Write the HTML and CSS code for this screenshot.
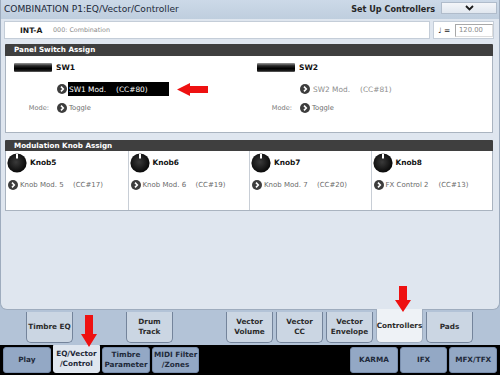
FILE: index.html
```html
<!DOCTYPE html>
<html>
<head>
<meta charset="utf-8">
<link rel="stylesheet" href="styles.css">
</head>
<body>
<div class="screen">
  <div class="main">
    <div class="titlebar">
      <span class="title">COMBINATION P1:EQ/Vector/Controller</span>
      <span class="setup">Set Up Controllers</span>
      <span class="dropdown"><svg width="9" height="6" viewBox="0 0 9 6"><polyline points="1,1 4.5,4.5 8,1" fill="none" stroke="#1a1a1a" stroke-width="1.8"/></svg></span>
    </div>
    <div class="inforow">
      <div class="prog"><span class="bank">INT-A</span><span class="progname">000: Combination</span></div>
      <div class="tempo"><span class="note">&#9833; =</span><span class="tempoval">120.00</span></div>
    </div>

    <section class="group">
      <div class="ghead">Panel Switch Assign</div>
      <div class="gbody swgrid">
        <div class="sw">
          <div class="swhead"><span class="swbar"></span><span class="swname">SW1</span></div>
          <div class="swrow">
            <span class="lbl"></span>
            <svg class="pick" width="10" height="10" viewBox="0 0 10 10"><circle cx="5" cy="5" r="5" fill="#3d3d3d"/><polyline points="4,2.6 6.3,5 4,7.4" fill="none" stroke="#fff" stroke-width="1.6"/></svg>
            <span class="val sel"><span class="vname">SW1 Mod.</span><span class="cc">(CC#80)</span></span>
          </div>
          <div class="swrow mode">
            <span class="lbl">Mode:</span>
            <svg class="pick" width="10" height="10" viewBox="0 0 10 10"><circle cx="5" cy="5" r="5" fill="#3d3d3d"/><polyline points="4,2.6 6.3,5 4,7.4" fill="none" stroke="#fff" stroke-width="1.6"/></svg>
            <span class="plain">Toggle</span>
          </div>
        </div>
        <div class="sw">
          <div class="swhead"><span class="swbar"></span><span class="swname">SW2</span></div>
          <div class="swrow">
            <span class="lbl"></span>
            <svg class="pick" width="10" height="10" viewBox="0 0 10 10"><circle cx="5" cy="5" r="5" fill="#3d3d3d"/><polyline points="4,2.6 6.3,5 4,7.4" fill="none" stroke="#fff" stroke-width="1.6"/></svg>
            <span class="val dim"><span class="vname">SW2 Mod.</span><span class="cc">(CC#81)</span></span>
          </div>
          <div class="swrow mode">
            <span class="lbl">Mode:</span>
            <svg class="pick" width="10" height="10" viewBox="0 0 10 10"><circle cx="5" cy="5" r="5" fill="#3d3d3d"/><polyline points="4,2.6 6.3,5 4,7.4" fill="none" stroke="#fff" stroke-width="1.6"/></svg>
            <span class="plain">Toggle</span>
          </div>
        </div>
      </div>
    </section>

    <section class="group knobs">
      <div class="ghead">Modulation Knob Assign</div>
      <div class="gbody knobgrid">
        <div class="knob">
          <div class="khead"><svg class="kicon" width="20" height="20" viewBox="0 0 20 20"><defs><radialGradient id="kg" cx="0.45" cy="0.45" r="0.6"><stop offset="0" stop-color="#3a3a3a"/><stop offset="1" stop-color="#050505"/></radialGradient></defs><circle cx="10" cy="10" r="9.6" fill="url(#kg)"/><line x1="10" y1="0.8" x2="10" y2="5.5" stroke="#fff" stroke-width="2"/></svg><span class="kname">Knob5</span></div>
          <div class="krow"><svg class="pick" width="10" height="10" viewBox="0 0 10 10"><circle cx="5" cy="5" r="5" fill="#3d3d3d"/><polyline points="4,2.6 6.3,5 4,7.4" fill="none" stroke="#fff" stroke-width="1.6"/></svg><span class="kval">Knob Mod. 5</span><span class="kcc">(CC#17)</span></div>
        </div>
        <div class="knob">
          <div class="khead"><svg class="kicon" width="20" height="20" viewBox="0 0 20 20"><circle cx="10" cy="10" r="9.6" fill="url(#kg)"/><line x1="10" y1="0.8" x2="10" y2="5.5" stroke="#fff" stroke-width="2"/></svg><span class="kname">Knob6</span></div>
          <div class="krow"><svg class="pick" width="10" height="10" viewBox="0 0 10 10"><circle cx="5" cy="5" r="5" fill="#3d3d3d"/><polyline points="4,2.6 6.3,5 4,7.4" fill="none" stroke="#fff" stroke-width="1.6"/></svg><span class="kval">Knob Mod. 6</span><span class="kcc">(CC#19)</span></div>
        </div>
        <div class="knob">
          <div class="khead"><svg class="kicon" width="20" height="20" viewBox="0 0 20 20"><circle cx="10" cy="10" r="9.6" fill="url(#kg)"/><line x1="10" y1="0.8" x2="10" y2="5.5" stroke="#fff" stroke-width="2"/></svg><span class="kname">Knob7</span></div>
          <div class="krow"><svg class="pick" width="10" height="10" viewBox="0 0 10 10"><circle cx="5" cy="5" r="5" fill="#3d3d3d"/><polyline points="4,2.6 6.3,5 4,7.4" fill="none" stroke="#fff" stroke-width="1.6"/></svg><span class="kval">Knob Mod. 7</span><span class="kcc">(CC#20)</span></div>
        </div>
        <div class="knob">
          <div class="khead"><svg class="kicon" width="20" height="20" viewBox="0 0 20 20"><circle cx="10" cy="10" r="9.6" fill="url(#kg)"/><line x1="10" y1="0.8" x2="10" y2="5.5" stroke="#fff" stroke-width="2"/></svg><span class="kname">Knob8</span></div>
          <div class="krow"><svg class="pick" width="10" height="10" viewBox="0 0 10 10"><circle cx="5" cy="5" r="5" fill="#3d3d3d"/><polyline points="4,2.6 6.3,5 4,7.4" fill="none" stroke="#fff" stroke-width="1.6"/></svg><span class="kval">FX Control 2</span><span class="kcc">(CC#13)</span></div>
        </div>
      </div>
    </section>
  </div>

  <div class="tabs1">
    <div class="tab1">Timbre EQ</div>
    <div class="tab1 empty"></div>
    <div class="tab1">Drum<br>Track</div>
    <div class="tab1 empty"></div>
    <div class="tab1">Vector<br>Volume</div>
    <div class="tab1">Vector<br>CC</div>
    <div class="tab1">Vector<br>Envelope</div>
    <div class="tab1 active">Controllers</div>
    <div class="tab1">Pads</div>
  </div>

  <div class="tabs2">
    <div class="tab2">Play</div>
    <div class="tab2 active">EQ/Vector<br>/Control</div>
    <div class="tab2">Timbre<br>Parameter</div>
    <div class="tab2">MIDI Filter<br>/Zones</div>
    <div class="tab2 empty"></div>
    <div class="tab2 empty"></div>
    <div class="tab2 empty"></div>
    <div class="tab2">KARMA</div>
    <div class="tab2">IFX</div>
    <div class="tab2">MFX/TFX</div>
  </div>

  <svg class="arrow arrow-left" width="31" height="13" viewBox="0 0 31 13"><polygon points="0,6.5 13,0 13,3 31,3 31,10 13,10 13,13" fill="#ee1111"/></svg>
  <svg class="arrow arrow-down1" width="16" height="32" viewBox="0 0 16 32"><polygon points="4,0 12,0 12,19 16,19 8,32 0,19 4,19" fill="#ee1111"/></svg>
  <svg class="arrow arrow-down2" width="16" height="26" viewBox="0 0 16 26"><polygon points="4,0 12,0 12,14 16,14 8,26 0,14 4,14" fill="#ee1111"/></svg>
</div>
</body>
</html>
```

FILE: styles.css
```css
* { box-sizing: border-box; }

html, body {
  margin: 0;
  padding: 0;
}

body {
  width: 500px;
  height: 375px;
  overflow: hidden;
  font-family: "DejaVu Sans", Verdana, sans-serif;
}

.screen {
  position: relative;
  width: 500px;
  height: 375px;
  overflow: hidden;
  background: #b3c3d7;
  display: flex;
  flex-direction: column;
}

.main {
  height: 310px;
  flex: none;
  background: #dfe6ef;
  border: 1px solid #9eacbe;
  border-top: none;
  border-radius: 0 0 7px 7px;
  display: flex;
  flex-direction: column;
}

/* title bar */
.titlebar {
  height: 19px;
  display: flex;
  align-items: flex-start;
  background: linear-gradient(#ccd9e8, #bfcede);
  padding: 0 2px 0 3px;
}

.title {
  flex: 1;
  font-size: 9.1px;
  line-height: 19px;
  color: #1c2838;
}

.setup {
  font-weight: bold;
  font-size: 8.1px;
  line-height: 18px;
  color: #262626;
  margin-right: 6px;
}

.dropdown {
  width: 56px;
  height: 12px;
  margin-top: 2px;
  background: linear-gradient(#f4f6f9, #e0e7ef);
  border: 1px solid #b0bccb;
  display: flex;
  align-items: center;
  justify-content: center;
}

/* info row */
.inforow {
  height: 22px;
  display: flex;
  gap: 3px;
  padding: 2px 5px 0 3px;
}

.prog {
  width: 426px;
  height: 18px;
  background: #fff;
  border: 1px solid #c4cdd8;
  display: flex;
  align-items: center;
}

.bank {
  font-weight: bold;
  font-size: 7.6px;
  color: #1a1a1a;
  margin-left: 15px;
  width: 33px;
}

.progname {
  font-size: 6.4px;
  color: #8a8a8a;
}

.tempo {
  flex: 1;
  height: 18px;
  background: #fff;
  border: 1px solid #c4cdd8;
  display: flex;
  align-items: center;
}

.note {
  font-size: 7.5px;
  color: #222;
  margin-left: 4px;
  width: 17px;
}

.tempoval {
  width: 38px;
  height: 13px;
  border: 1px solid #a8a8a8;
  border-right-color: #ddd;
  border-bottom-color: #ddd;
  font-size: 6.8px;
  line-height: 11px;
  color: #8a8a8a;
  padding-left: 3px;
}

/* groups */
.group {
  margin: 3px 6px 0 4px;
}

.knobs {
  margin-top: 7px;
}

.ghead {
  height: 12px;
  background: #3f3f3f;
  color: #fff;
  font-weight: bold;
  font-size: 7.2px;
  line-height: 12px;
  padding-left: 9px;
  border-radius: 1px 1px 0 0;
}

.knobs .ghead {
  height: 11px;
  line-height: 11px;
}

.gbody {
  background: #fff;
  border: 1px solid #aab4c0;
  border-top: none;
}

.swgrid {
  height: 77px;
  display: grid;
  grid-template-columns: 1fr 1fr;
}

.sw {
  padding: 7px 0 0 8px;
}

.swhead {
  display: flex;
  align-items: center;
  height: 9px;
}

.swbar {
  width: 38px;
  height: 9px;
  border-radius: 1px;
  background: linear-gradient(#9a9a9a, #2a2a2a 30%, #000 60%, #1a1a1a 85%, #6a6a6a);
}

.swname {
  font-weight: bold;
  font-size: 7.6px;
  color: #111;
  margin-left: 4px;
}

.swrow {
  display: flex;
  align-items: center;
  height: 14px;
  margin-top: 10px;
  margin-left: -8px;
}

.swrow.mode {
  margin-top: 5px;
}

.lbl {
  width: 51px;
  padding-right: 8px;
  text-align: right;
  font-size: 6.6px;
  color: #7a7a7a;
}

.pick {
  flex: none;
  display: block;
}

.val {
  display: flex;
  align-items: center;
  height: 14px;
  font-size: 7.4px;
  margin-left: 1px;
}

.val.sel {
  width: 101px;
  background: #000;
  color: #fff;
  padding-left: 1px;
}

.val.dim {
  color: #8c8c8c;
  margin-left: 3px;
}

.vname {
  width: 47px;
}

.plain {
  font-size: 6.8px;
  color: #6a6a6a;
  margin-left: 2px;
}

/* knobs */
.knobgrid {
  height: 60px;
  display: grid;
  grid-template-columns: repeat(4, 1fr);
}

.knob {
  border-left: 1px solid #c8ced6;
  padding: 2px 0 0 1px;
}

.knob:first-child {
  border-left: none;
}

.khead {
  display: flex;
  align-items: center;
  height: 20px;
}

.kicon {
  display: block;
}

.kname {
  font-weight: bold;
  font-size: 7.4px;
  color: #111;
  margin-left: 3px;
  margin-top: -2px;
}

.krow {
  display: flex;
  align-items: center;
  margin-top: 6px;
  padding-left: 1px;
  height: 11px;
}

.kval {
  width: 53px;
  margin-left: 2px;
  font-size: 7px;
  color: #6a6a6a;
}

.kcc {
  font-size: 7px;
  color: #6a6a6a;
}

/* lower tab row */
.tabs1 {
  height: 35px;
  flex: none;
  display: flex;
  gap: 3px;
  padding-left: 26px;
}

.tab1 {
  width: 47px;
  height: 31px;
  margin-top: 2px;
  background: #cbd6e3;
  border: 1px solid #74849b;
  border-top: none;
  border-radius: 0 0 5px 5px;
  display: flex;
  align-items: center;
  justify-content: center;
  text-align: center;
  font-weight: bold;
  font-size: 7.3px;
  line-height: 10.5px;
  color: #2c2c2c;
}

.tab1.empty {
  visibility: hidden;
}

.tab1.active {
  margin-top: -1px;
  height: 34px;
  background: #eef2f6;
  border-color: #9eacbe;
  padding-top: 2px;
}

/* bottom tab row */
.tabs2 {
  flex: 1;
  background: #000;
  display: grid;
  grid-template-columns: repeat(10, 1fr);
  column-gap: 2px;
  padding: 2px 3px 2px 3px;
}

.tab2 {
  background: #93a8c5;
  border: 1px solid #7a8fae;
  border-radius: 3px;
  display: flex;
  align-items: center;
  justify-content: center;
  text-align: center;
  font-weight: bold;
  font-size: 7.3px;
  line-height: 10.5px;
  color: #1f2a3a;
}

.tab2.empty {
  visibility: hidden;
}

.tab2.active {
  background: #dfe6ef;
  border-color: #dfe6ef;
  margin-top: -2px;
  border-radius: 0 0 3px 3px;
}

/* red annotation arrows (overlays) */
.arrow {
  position: absolute;
  display: block;
}

.arrow-left {
  left: 177px;
  top: 83px;
}

.arrow-down1 {
  left: 81px;
  top: 315px;
}

.arrow-down2 {
  left: 395px;
  top: 286px;
}
```
